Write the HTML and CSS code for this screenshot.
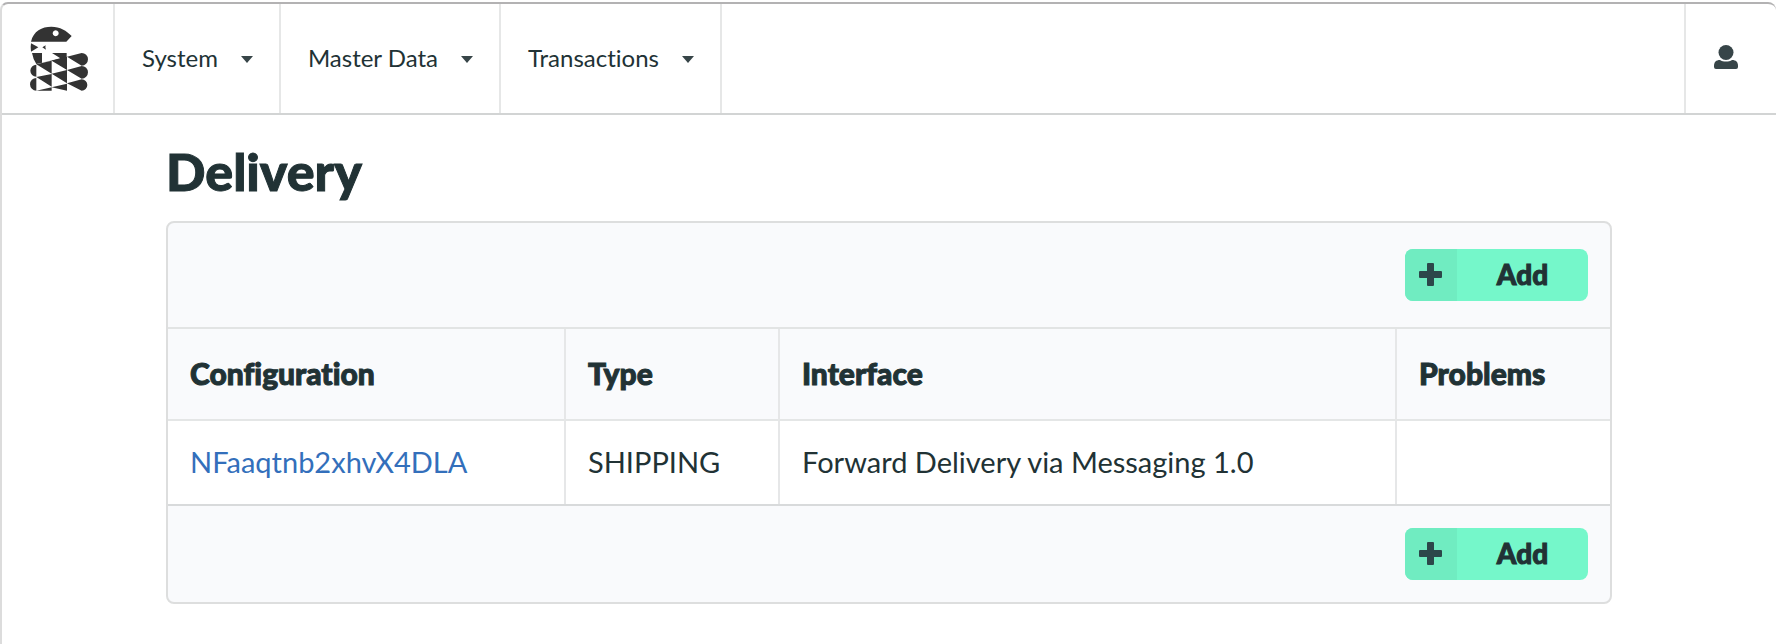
FILE: index.html
```html
<!DOCTYPE html>
<html lang="en">
<head>
<meta charset="utf-8">
<title>Delivery</title>
<link rel="stylesheet" href="styles.css">
</head>
<body>
<header class="navbar">
  <a class="nav-cell logo" href="#" aria-label="Home">
    <svg viewBox="0 0 180 198" width="60" height="66" aria-hidden="true">
      <path fill="#333" fill-rule="evenodd" d="M6 47C13 15 39 2 67 2C93 2 113 14 128 30L112 47ZM80 13a9 9 0 1 0 .1 0Z"/>
      <path fill="#333" d="M6 52L28 64L6 77Q4 64 6 52ZM40 64L50 58L49 64L51 71ZM9 81H39V110L70 103L94 97L69 81H113V113L67 104L22 114Q12 99 9 81Z"/>
      <path fill="#333" d="M114 92L158 81A18 18 0 0 1 158 119ZM114 132L158 120A18 18 0 0 1 158 158ZM114 172L158 160A17 17 0 0 1 158 194Z"/>
      <path fill="#333" d="M22 116V152A18 18 0 0 1 22 116ZM22 156V194A18 18 0 0 1 22 156ZM22 115L68 104V143ZM68 104L114 92V132ZM22 153L68 144V182ZM68 143L114 132V172ZM22 194L68 184V194ZM68 184L114 173V194Z"/>
    </svg>
  </a>
  <nav class="menu">
    <button class="nav-cell menu-item" type="button">System<svg class="caret" viewBox="0 0 12 7" width="12" height="7" aria-hidden="true"><path d="M0 0H12L6 7Z"/></svg></button>
    <button class="nav-cell menu-item" type="button">Master Data<svg class="caret" viewBox="0 0 12 7" width="12" height="7" aria-hidden="true"><path d="M0 0H12L6 7Z"/></svg></button>
    <button class="nav-cell menu-item" type="button">Transactions<svg class="caret" viewBox="0 0 12 7" width="12" height="7" aria-hidden="true"><path d="M0 0H12L6 7Z"/></svg></button>
  </nav>
  <button class="user" type="button" aria-label="Account">
    <svg viewBox="0 0 24 24" width="24" height="24" aria-hidden="true"><circle cx="12" cy="7.5" r="7.5"/><path d="M0 21C0 17 2 15 6 15C9 17 15 17 18 15C22 15 24 17 24 21V22Q24 24 22 24H2Q0 24 0 22Z"/></svg>
  </button>
</header>
<main class="page">
  <h1 class="title">Delivery</h1>
  <section class="panel">
    <div class="toolbar toolbar-top">
      <button class="add" type="button"><span class="add-icon"><svg viewBox="0 0 23 23" width="23" height="23" aria-hidden="true"><path d="M9 0H14Q15 0 15 1V8H22Q23 8 23 9V14Q23 15 22 15H15V22Q15 23 14 23H9Q8 23 8 22V15H1Q0 15 0 14V9Q0 8 1 8H8V1Q8 0 9 0Z"/></svg></span><span class="add-label">Add</span></button>
    </div>
    <table class="grid">
      <colgroup><col class="c-config"><col class="c-type"><col class="c-interface"><col class="c-problems"></colgroup>
      <thead><tr><th>Configuration</th><th>Type</th><th>Interface</th><th>Problems</th></tr></thead>
      <tbody><tr><td><a class="link" href="#">NFaaqtnb2xhvX4DLA</a></td><td>SHIPPING</td><td>Forward Delivery via Messaging 1.0</td><td></td></tr></tbody>
    </table>
    <div class="toolbar">
      <button class="add" type="button"><span class="add-icon"><svg viewBox="0 0 23 23" width="23" height="23" aria-hidden="true"><path d="M9 0H14Q15 0 15 1V8H22Q23 8 23 9V14Q23 15 22 15H15V22Q15 23 14 23H9Q8 23 8 22V15H1Q0 15 0 14V9Q0 8 1 8H8V1Q8 0 9 0Z"/></svg></span><span class="add-label">Add</span></button>
    </div>
  </section>
</main>
</body>
</html>
```
FILE: styles.css
```css
* { box-sizing: border-box; }
html { background: #fff; }
body {
  margin: 2px 0 0;
  min-height: calc(100vh - 2px);
  border-top: 2px solid #b3b2b3;
  border-left: 2px solid #dcdcdc;
  border-radius: 8px 8px 0 0;
  color: #213235;
  font-family: Lato, "Open Sans", sans-serif;
  font-size: 29px;
  line-height: 34px;
  font-variant-ligatures: none;
}
button { margin: 0; padding: 0; border: 0; background: none; color: inherit; font: inherit; font-variant-ligatures: none; cursor: pointer; }
.navbar { display: flex; height: 111px; border-bottom: 2px solid #d2d4d4; }
.nav-cell { display: flex; align-items: center; border-right: 2px solid #e6e7e7; }
.logo { padding: 0 24px 0 27px; }
.menu { display: flex; flex: 1; }
.menu-item { padding: 0 26px 2px 27px; gap: 23px; font-size: 24px; }
.caret, .user { fill: #374548; }
.caret { margin-top: 3px; }
.user { width: 92px; padding: 0 10px 2px 0; border-left: 2px solid #e6e7e7; }
.page { max-width: 1494px; margin: 0 auto; padding: 26px 24px; }
.title { margin: 0 0 20px; font-size: 52px; line-height: 60px; font-weight: 900; -webkit-text-stroke: 1px currentColor; }
.panel { border: 2px solid #dddede; border-radius: 8px; background: #f9fafc; overflow: hidden; }
.toolbar { display: flex; justify-content: flex-end; padding: 22px; }
.toolbar-top { padding: 26px 22px; }
.add { display: flex; width: 183px; height: 52px; border-radius: 8px; overflow: hidden; background: #75f7ca; font-size: 28px; font-weight: 900; -webkit-text-stroke: 1px currentColor; }
.add-icon { display: flex; align-items: center; justify-content: center; width: 52px; height: 52px; padding: 0 2px 2px 0; background: #70ecc1; fill: #2c474a; }
.add-label { flex: 1; line-height: 50px; text-align: center; }
.grid { width: 100%; table-layout: fixed; border-collapse: separate; border-spacing: 0; border-top: 2px solid #e2e4e4; border-bottom: 2px solid #d8dadb; }
.c-config { width: 396px; }
.c-type { width: 214px; }
.c-problems { width: 215px; }
th, td { padding: 0 22px 2px; text-align: left; border-left: 2px solid #e6e7e8; }
th:first-child, td:first-child { border-left: 0; }
th { height: 92px; font-size: 30px; font-weight: 900; -webkit-text-stroke: 1px currentColor; border-bottom: 2px solid #e4e6e6; }
td { height: 83px; background: #fff; }
.link { color: #336fbb; text-decoration: none; }
```
